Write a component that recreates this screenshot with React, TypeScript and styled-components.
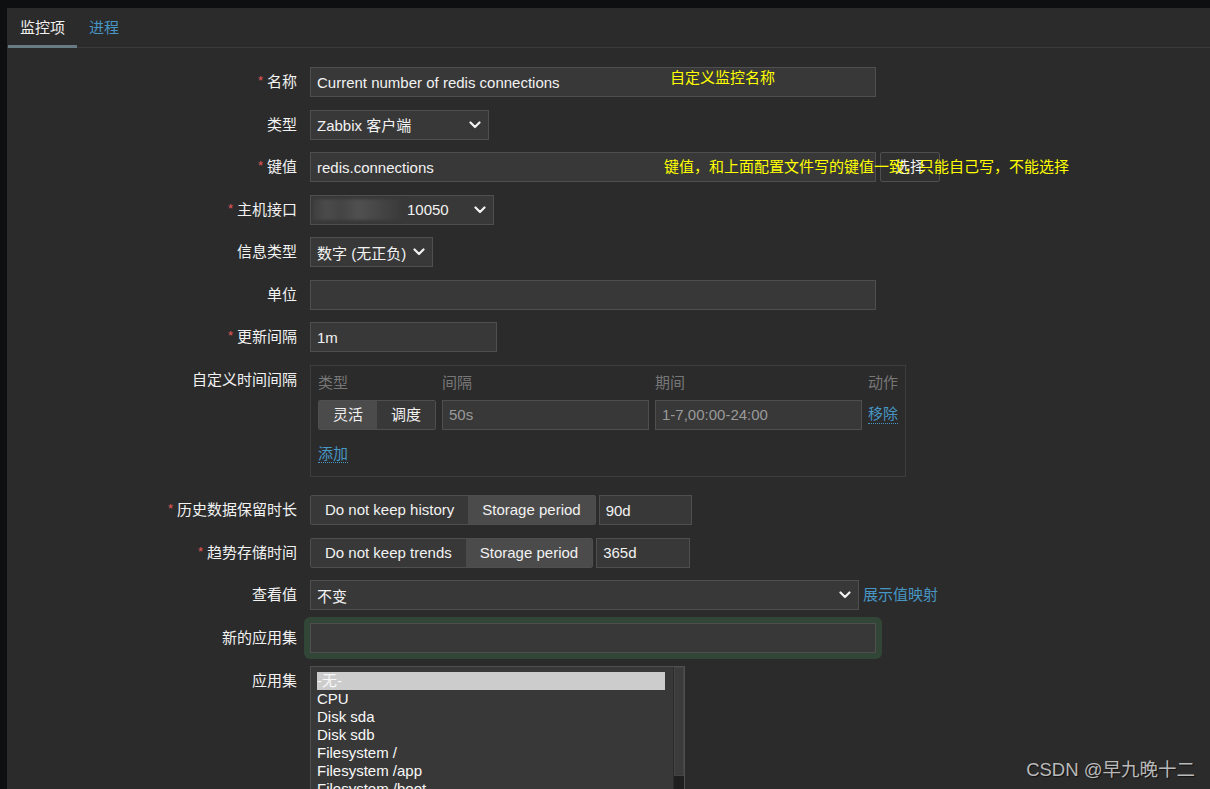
import React from "react"
import styled, { createGlobalStyle } from "styled-components"

const GlobalStyle = createGlobalStyle`
  * { box-sizing: border-box; }
  html, body { margin: 0; background: #0e0f11; }
  body {
    font-family: "Liberation Sans", Arial, "Noto Sans CJK SC", sans-serif;
    font-size: 15px;
    color: #f2f2f2;
  }
`

const Page = styled.div`
    height: 789px;
    overflow: hidden;
    padding: 8px 0 0 7px;
  `,
  Panel = styled.div`
    position: relative;
    height: 100%;
    background: #2b2b2b;
  `,
  TabBar = styled.div`
    display: flex;
    height: 40px;
    border-bottom: 1px solid #3a3a3a;
  `,
  Tab = styled.div<{ $active?: boolean }>`
    padding: 0 12px;
    line-height: 39px;
    height: 40px;
    color: ${p => (p.$active ? "#f2f2f2" : "#4796c4")};
    border-bottom: 3px solid ${p => (p.$active ? "#687b85" : "transparent")};
    margin-left: ${p => (p.$active ? "1px" : "0")};
  `,
  Form = styled.div`
    display: flex;
    flex-direction: column;
    gap: 12.5px;
    padding-top: 19px;
  `,
  Row = styled.div<{ $extra?: number }>`
    display: grid;
    grid-template-columns: 290px 1fr;
    column-gap: 13px;
    align-items: start;
    margin-bottom: ${p => p.$extra ?? 0}px;
  `,
  Label = styled.div`
    height: 30px;
    text-align: right;
    line-height: 30px;
    white-space: nowrap;
  `,
  Star = styled.span`
    display: inline-block;
    color: #e45959;
    font-size: 13px;
    line-height: 0;
    margin-right: 4px;
    position: relative;
    top: -2px;
  `,
  Fields = styled.div<{ $gap?: number }>`
    display: flex;
    align-items: center;
    gap: ${p => p.$gap ?? 4}px;
  `,
  TextBox = styled.input<{ $w: number; $muted?: boolean }>`
    display: block;
    width: ${p => p.$w}px;
    height: 30px;
    margin: 0;
    padding: 0 6px;
    background: #383838;
    border: 1px solid #4f4f4f;
    color: ${p => (p.$muted ? "#9a9a9a" : "#f2f2f2")};
    font: inherit;
    outline: none;
  `,
  Glow = styled.div`
    border-radius: 2px;
    box-shadow: 0 0 0 6px #324637;
    width: max-content;
  `,
  SelectBox = styled.div<{ $w: number; $pl?: number }>`
    width: ${p => p.$w}px;
    height: 30px;
    display: flex;
    align-items: center;
    justify-content: space-between;
    padding: 0 7px 0 ${p => p.$pl ?? 6}px;
    background: #383838;
    border: 1px solid #4f4f4f;
    white-space: nowrap;
  `,
  SelectValue = styled.span`
    display: flex;
    align-items: center;
  `,
  Blurred = styled.span`
    display: inline-block;
    width: 88px;
    height: 21px;
    margin-right: 6px;
    background: linear-gradient(
      90deg,
      #3f3f3f 0%,
      #4b4b4b 15%,
      #444 32%,
      #505050 52%,
      #474747 72%,
      #3a3a3a 100%
    );
    filter: blur(1.5px);
  `,
  Button = styled.div`
    height: 30px;
    line-height: 28px;
    padding: 0 14px;
    background: #303030;
    border: 1px solid #4f4f4f;
    border-radius: 2px;
  `,
  Segmented = styled.div`
    display: inline-flex;
    height: 30px;
    border: 1px solid #4f4f4f;
    border-radius: 2px;
    overflow: hidden;
  `,
  SegButton = styled.div<{ $active?: boolean }>`
    padding: 0 14px;
    line-height: 28px;
    white-space: nowrap;
    background: ${p => (p.$active ? "#4b4b4b" : "#383838")};
  `,
  Link = styled.span<{ $dotted?: boolean }>`
    color: #4796c4;
    white-space: nowrap;
    border-bottom: ${p => (p.$dotted ? "1px dotted #4796c4" : "none")};
    line-height: 18px;
  `,
  IntervalBox = styled.div`
    width: 596px;
    border: 1px solid #3d3d3d;
    padding: 8px 7px 13px;
    display: grid;
    grid-template-columns: 118px 207px 207px 30px;
    column-gap: 6px;
    row-gap: 8px;
  `,
  ColHead = styled.div<{ $right?: boolean }>`
    color: #777;
    line-height: 18px;
    text-align: ${p => (p.$right ? "right" : "left")};
  `,
  ActionCell = styled.div`
    display: flex;
    align-items: center;
    justify-content: flex-end;
    height: 30px;
  `,
  AddCell = styled.div`
    grid-column: 1 / -1;
    padding-top: 7px;
  `,
  ListBox = styled.div`
    width: 375px;
    height: 140px;
    display: grid;
    grid-template-columns: 1fr 11px;
    background: #383838;
    border: 1px solid #4f4f4f;
  `,
  Items = styled.div`
    padding: 5px 8px 0 6px;
  `,
  Item = styled.div<{ $selected?: boolean }>`
    line-height: 18px;
    white-space: nowrap;
    background: ${p => (p.$selected ? "#cccccc" : "transparent")};
    color: #f8f8f8;
  `,
  Scrollbar = styled.div`
    background: #1f1f1f;
    border-left: 1px solid #2c2c2c;
  `,
  Thumb = styled.div`
    height: 109px;
    background: #3b3b3b;
    border: 1px solid #444;
  `,
  Note = styled.div<{ $left: number; $top: number }>`
    position: absolute;
    left: ${p => p.$left}px;
    top: ${p => p.$top}px;
    color: #ffff00;
    line-height: 18px;
    white-space: nowrap;
    font-family: "Noto Sans CJK SC", sans-serif;
  `,
  Watermark = styled.div`
    position: absolute;
    right: 15px;
    bottom: 8px;
    font-size: 18.5px;
    color: #b9b9b9;
    text-shadow: 1px 1px 1px rgba(0, 0, 0, 0.6);
    white-space: nowrap;
  `

const Chevron = () => (
  <svg width="12" height="8" viewBox="0 0 12 8">
    <path
      d="M1.5 1.5 L6 6 L10.5 1.5"
      fill="none"
      stroke="#f2f2f2"
      strokeWidth="2.2"
      strokeLinecap="round"
      strokeLinejoin="round"
    />
  </svg>
)

const Field = ({
  label,
  required,
  extra,
  children
}: {
  label: string
  required?: boolean
  extra?: number
  children: React.ReactNode
}) => (
  <Row $extra={extra}>
    <Label>
      {required && <Star>*</Star>}
      {label}
    </Label>
    {children}
  </Row>
)

const applications = [
  "-无-",
  "CPU",
  "Disk sda",
  "Disk sdb",
  "Filesystem /",
  "Filesystem /app",
  "Filesystem /boot"
]

export default function App() {
  return (
    <>
      <GlobalStyle />
      <Page>
        <Panel>
          <TabBar>
            <Tab $active>监控项</Tab>
            <Tab>进程</Tab>
          </TabBar>

          <Form>
            <Field label="名称" required>
              <Fields>
                <TextBox $w={566} readOnly value="Current number of redis connections" />
              </Fields>
            </Field>

            <Field label="类型">
              <Fields>
                <SelectBox $w={179}>
                  <SelectValue>Zabbix 客户端</SelectValue>
                  <Chevron />
                </SelectBox>
              </Fields>
            </Field>

            <Field label="键值" required>
              <Fields>
                <TextBox $w={566} readOnly value="redis.connections" />
                <Button>选择</Button>
              </Fields>
            </Field>

            <Field label="主机接口" required>
              <Fields>
                <SelectBox $w={184} $pl={2}>
                  <SelectValue>
                    <Blurred />
                    10050
                  </SelectValue>
                  <Chevron />
                </SelectBox>
              </Fields>
            </Field>

            <Field label="信息类型">
              <Fields>
                <SelectBox $w={123}>
                  <SelectValue>数字 (无正负)</SelectValue>
                  <Chevron />
                </SelectBox>
              </Fields>
            </Field>

            <Field label="单位">
              <Fields>
                <TextBox $w={566} readOnly value="" />
              </Fields>
            </Field>

            <Field label="更新间隔" required>
              <Fields>
                <TextBox $w={187} readOnly value="1m" />
              </Fields>
            </Field>

            <Field label="自定义时间间隔" extra={6}>
              <IntervalBox>
                <ColHead>类型</ColHead>
                <ColHead>间隔</ColHead>
                <ColHead>期间</ColHead>
                <ColHead $right>动作</ColHead>
                <Segmented>
                  <SegButton $active>灵活</SegButton>
                  <SegButton>调度</SegButton>
                </Segmented>
                <TextBox $w={207} $muted readOnly value="50s" />
                <TextBox $w={207} $muted readOnly value="1-7,00:00-24:00" />
                <ActionCell>
                  <Link $dotted>移除</Link>
                </ActionCell>
                <AddCell>
                  <Link $dotted>添加</Link>
                </AddCell>
              </IntervalBox>
            </Field>

            <Field label="历史数据保留时长" required>
              <Fields $gap={3}>
                <Segmented>
                  <SegButton>Do not keep history</SegButton>
                  <SegButton $active>Storage period</SegButton>
                </Segmented>
                <TextBox $w={93} readOnly value="90d" />
              </Fields>
            </Field>

            <Field label="趋势存储时间" required>
              <Fields $gap={3}>
                <Segmented>
                  <SegButton>Do not keep trends</SegButton>
                  <SegButton $active>Storage period</SegButton>
                </Segmented>
                <TextBox $w={94} readOnly value="365d" />
              </Fields>
            </Field>

            <Field label="查看值">
              <Fields>
                <SelectBox $w={549}>
                  <SelectValue>不变</SelectValue>
                  <Chevron />
                </SelectBox>
                <Link>展示值映射</Link>
              </Fields>
            </Field>

            <Field label="新的应用集" extra={1}>
              <Fields>
                <Glow>
                  <TextBox $w={566} readOnly value="" />
                </Glow>
              </Fields>
            </Field>

            <Field label="应用集">
              <ListBox>
                <Items>
                  {applications.map((a, i) => (
                    <Item key={a} $selected={i === 0}>
                      {a}
                    </Item>
                  ))}
                </Items>
                <Scrollbar>
                  <Thumb />
                </Scrollbar>
              </ListBox>
            </Field>
          </Form>

          <Note $left={663} $top={60}>
            自定义监控名称
          </Note>
          <Note $left={657} $top={149}>
            键值，和上面配置文件写的键值一致，只能自己写，不能选择
          </Note>
          <Watermark>CSDN @早九晚十二</Watermark>
        </Panel>
      </Page>
    </>
  )
}
